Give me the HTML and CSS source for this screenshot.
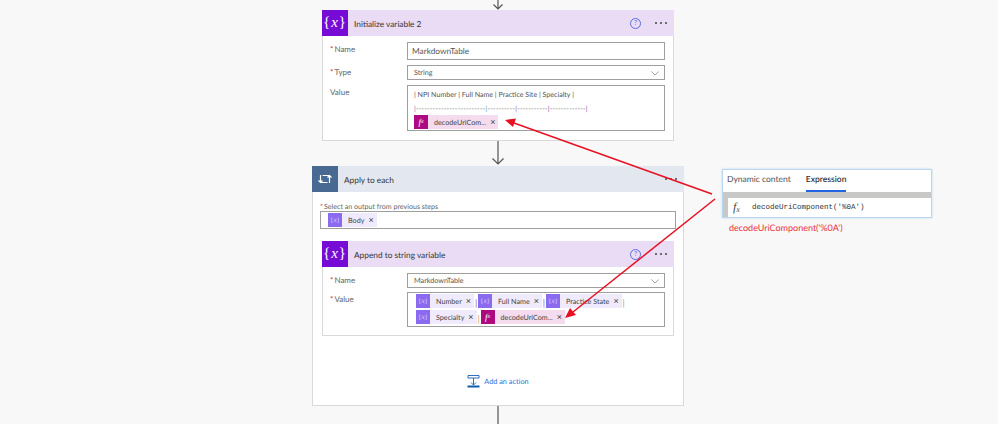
FILE: index.html
```html
<!DOCTYPE html>
<html lang="en">
<head>
  <meta charset="UTF-8">
  <title>Flow variables</title>
  <link rel="stylesheet" href="styles.css">
</head>
<body>
  <div class="flow">
    <svg class="arrow arrow-top" width="14" height="10" viewBox="0 0 14 10"><path d="M7 0V9M2.500 4.500L7 9L11.500 4.500"/></svg>

    <div class="card">
      <div class="card-head var-head">
        <div class="head-icon var-icon">{<i>x</i>}</div>
        <div class="head-title">Initialize variable 2</div>
        <div class="help">?</div>
        <div class="dots"><span></span><span></span><span></span></div>
      </div>
      <div class="card-body">
        <div class="row">
          <div class="label"><b>*</b>Name</div>
          <div class="field field-name">MarkdownTable</div>
        </div>
        <div class="row">
          <div class="label"><b>*</b>Type</div>
          <div class="field field-select">String
            <svg class="chevron" width="8" height="5" viewBox="0 0 10 6"><path d="M0.500 0.500L5 5L9.500 0.500"/></svg>
          </div>
        </div>
        <div class="row">
          <div class="label">Value</div>
          <div class="field field-value">
            <div class="value-line">| NPI Number | Full Name | Practice Site | Specialty |</div>
            <div class="value-line dash-line"><span class="p1">|</span>-------------------------<span class="p2">|</span>----------<span class="p3">|</span>-----------<span class="p4">|</span>-------------<span class="p4">|</span></div>
            <div class="chips">
              <div class="chip chip-fx"><span class="chip-icon fx-icon">f<sub>x</sub></span><span class="chip-text">decodeUriCom...</span><span class="chip-x">×</span></div>
            </div>
          </div>
        </div>
      </div>
    </div>

    <svg class="arrow arrow-mid" width="14" height="25" viewBox="0 0 14 25"><path d="M7 0V23M1.500 17.500L7 23L12.500 17.500"/></svg>

    <div class="loop">
      <div class="card-head loop-head">
        <div class="head-icon loop-icon">
          <svg width="14" height="12" viewBox="0 0 14 12"><path d="M2.500 2V9.500H9.500M11.500 10V2.500H4.500M0.500 7.500L2.500 9.500L4.500 7.500M9.500 4.500L11.500 2.500L13.500 4.500"/></svg>
        </div>
        <div class="head-title">Apply to each</div>
        <div class="dots"><span></span><span></span><span></span></div>
      </div>
      <div class="loop-body">
        <div class="top-label"><b>*</b>Select an output from previous steps</div>
        <div class="field field-output">
          <div class="chip chip-var"><span class="chip-icon var-chip-icon">{<i>x</i>}</span><span class="chip-text">Body</span><span class="chip-x">×</span></div>
        </div>

        <div class="card card-inner">
          <div class="card-head var-head">
            <div class="head-icon var-icon">{<i>x</i>}</div>
            <div class="head-title">Append to string variable</div>
            <div class="help">?</div>
            <div class="dots"><span></span><span></span><span></span></div>
          </div>
          <div class="card-body inner-body">
            <div class="row">
              <div class="label"><b>*</b>Name</div>
              <div class="field field-select">MarkdownTable
                <svg class="chevron" width="8" height="5" viewBox="0 0 10 6"><path d="M0.500 0.500L5 5L9.500 0.500"/></svg>
              </div>
            </div>
            <div class="row">
              <div class="label"><b>*</b>Value</div>
              <div class="field field-tokens">
                <div class="chips">
                  <div class="chip chip-var"><span class="chip-icon var-chip-icon">{<i>x</i>}</span><span class="chip-text">Number</span><span class="chip-x">×</span></div>
                  <span class="p3 pipe">|</span>
                  <div class="chip chip-var"><span class="chip-icon var-chip-icon">{<i>x</i>}</span><span class="chip-text">Full Name</span><span class="chip-x">×</span></div>
                  <span class="p1 pipe">|</span>
                  <div class="chip chip-var"><span class="chip-icon var-chip-icon">{<i>x</i>}</span><span class="chip-text">Practice State</span><span class="chip-x">×</span></div>
                  <span class="p5 pipe">|</span>
                </div>
                <div class="chips">
                  <div class="chip chip-var"><span class="chip-icon var-chip-icon">{<i>x</i>}</span><span class="chip-text">Specialty</span><span class="chip-x">×</span></div>
                  <span class="p5 pipe">|</span>
                  <div class="chip chip-fx"><span class="chip-icon fx-icon">f<sub>x</sub></span><span class="chip-text">decodeUriCom...</span><span class="chip-x">×</span></div>
                </div>
              </div>
            </div>
          </div>
        </div>

        <div class="add-action">
          <svg width="13" height="13" viewBox="0 0 13 13"><path class="add-line" d="M1 0.500H12V3H1ZM6.500 3V10M4 7.500L6.500 10L9 7.500"/><path class="add-bar" d="M0.500 10.500H12.500V12.500H0.500Z"/></svg>
          <span>Add an action</span>
        </div>
      </div>
    </div>

    <svg class="arrow arrow-end" width="14" height="18" viewBox="0 0 14 18"><path d="M7 0V18"/></svg>
  </div>

  <div class="popover">
    <div class="tabs">
      <div class="tab">Dynamic content</div>
      <div class="tab tab-active">Expression</div>
    </div>
    <div class="expr-band"></div>
    <div class="expr-row">
      <span class="expr-fx">f<sub>x</sub></span>
      <span class="expr-code">decodeUriComponent('%0A')</span>
    </div>
  </div>
  <div class="caption">decodeUriComponent('%0A')</div>

  <svg class="callouts" width="998" height="424" viewBox="0 0 998 424">
    <path class="red-line" d="M712 194L514 123"/>
    <path class="red-head" d="M505 120L516 118.500L513 127Z"/>
    <path class="red-line" d="M715 199L573 312"/>
    <path class="red-head" d="M565 318L570 308L576 315Z"/>
  </svg>
</body>
</html>
```

FILE: styles.css
```css
html, body {
  margin: 0;
  height: 424px;
  overflow: hidden;
}

body {
  position: relative;
  background: #f8f8f8;
  color: #444;
  font-family: Lato, "Open Sans", sans-serif;
  font-size: 8px;
  text-rendering: geometricPrecision;
}

b {
  color: #d13438;
  font-weight: normal;
  margin-right: 1px;
}

.flow {
  display: flex;
  flex-direction: column;
  align-items: center;
  width: 372px;
  margin-left: 312px;
}

.arrow {
  display: block;
  flex: none;
}

.arrow path {
  fill: none;
  stroke: #555;
  stroke-width: 1.2;
}

/* cards */
.card {
  box-sizing: border-box;
  width: 352px;
  height: 131px;
  background: #fff;
  border: 1px solid #d9d9d9;
  border-top: none;
}

.card-head {
  display: flex;
  align-items: center;
  height: 26px;
}

.var-head {
  background: #ebdcf5;
  margin: 0 -1px;
}

.head-icon {
  display: flex;
  align-items: center;
  justify-content: center;
  flex: none;
  width: 26px;
  height: 26px;
  color: #fff;
}

.var-icon {
  background: #770bd6;
  font-family: "Liberation Serif", serif;
  font-size: 15px;
  letter-spacing: 1px;
}

.loop-icon {
  background: #486991;
}

.loop-icon path {
  fill: none;
  stroke: #fff;
  stroke-width: 1.200;
}

.head-title {
  flex: 1;
  margin-left: 6px;
  padding-top: 1px;
  color: #333;
  font-size: 8.300px;
}

.help {
  width: 9px;
  height: 9px;
  margin-right: 14px;
  border: 1px solid #5a6fd8;
  border-radius: 50%;
  color: #5a6fd8;
  font-size: 7px;
  line-height: 9px;
  text-align: center;
}

.dots {
  display: flex;
  gap: 3px;
  margin-right: 7px;
}

.dots span {
  width: 2px;
  height: 2px;
  background: #444;
  border-radius: 50%;
}

.card-body {
  display: flex;
  flex-direction: column;
  gap: 5px;
  padding: 6px 8px 0 7px;
}

.row {
  display: flex;
}

.label {
  width: 77px;
  flex: none;
  padding-top: 2px;
  color: #666;
  font-size: 8px;
}

.field {
  box-sizing: border-box;
  flex: 1;
  position: relative;
  background: #fff;
  border: 1px solid #9f9f9f;
  color: #555;
  padding-left: 6px;
}

.field-name {
  height: 18px;
  font-size: 8.300px;
  line-height: 16px;
  padding-left: 4px;
}

.field-select {
  height: 15px;
  font-size: 7.200px;
  line-height: 14px;
}

.chevron {
  position: absolute;
  right: 5px;
  top: 5px;
}

.chevron path {
  fill: none;
  stroke: #777;
  stroke-width: 0.900;
}

.field-value {
  height: 46px;
  padding: 2px 0 0 6px;
}

.value-line {
  height: 14px;
  color: #555;
  font-size: 7.100px;
  line-height: 14px;
  white-space: nowrap;
}

.dash-line {
  height: 13px;
  font-size: 7px;
  line-height: 14px;
  letter-spacing: 0.180px;
  color: #666;
}

.p1 { color: #7a5ca8; }
.p2 { color: #4f9ab8; }
.p3 { color: #a0527f; }
.p4 { color: #7b3fb0; }
.p5 { color: #b8a24e; }

/* tokens */
.chips {
  display: flex;
  align-items: center;
  height: 14px;
}

.chip {
  display: flex;
  align-items: center;
  height: 14px;
  flex: none;
  font-size: 7.200px;
  color: #444;
}

.chip-var {
  background: #f0ebfc;
}

.chip-fx {
  background: #f4dcee;
}

.chip-icon {
  display: flex;
  align-items: center;
  justify-content: center;
  width: 14px;
  height: 14px;
  color: #fff;
  font-family: "Liberation Serif", serif;
}

.var-chip-icon {
  background: #8a6bf0;
  font-size: 7px;
  color: #d6ccfa;
}

.fx-icon {
  background: #ad0a82;
  font-size: 9px;
  font-style: italic;
}

.fx-icon sub {
  font-size: 6px;
  vertical-align: -1px;
}

.chip-text {
  margin-left: 6px;
  white-space: nowrap;
}

.chip-x {
  margin: 0 3px 0 4px;
  font-size: 9px;
  line-height: 14px;
}

.pipe {
  width: 4px;
  flex: none;
  text-align: center;
  font-size: 9px;
  padding-top: 3px;
}

/* apply to each */
.loop {
  box-sizing: border-box;
  width: 372px;
  height: 240px;
  background: #fff;
  border: 1px solid #d9d9d9;
  border-top: none;
  flex: none;
}

.loop-head {
  background: #e3e8f0;
  margin: 0 -1px;
}

.loop-body {
  display: flex;
  flex-direction: column;
  padding: 10px 7px 0 7px;
}

.top-label {
  height: 9px;
  color: #666;
  font-size: 7.100px;
  line-height: 10px;
}

.field-output {
  flex: none;
  display: flex;
  align-items: center;
  height: 18px;
  padding-left: 7px;
}

.card-inner {
  height: 95px;
  align-self: center;
  margin-top: 12px;
  flex: none;
}

.inner-body {
  gap: 4px;
  padding-top: 6px;
}

.field-tokens {
  height: 35px;
  padding: 1px 0 0 8px;
  display: flex;
  flex-direction: column;
  gap: 2px;
}

.add-action {
  display: flex;
  align-items: center;
  justify-content: center;
  gap: 4px;
  margin-top: 39px;
  color: #2f6fd6;
  font-size: 7.300px;
}

.add-line {
  fill: none;
  stroke: #1a5fb4;
  stroke-width: 0.900;
}

.add-bar {
  fill: #0f5cad;
}

/* expression popover */
.popover {
  position: absolute;
  left: 722px;
  top: 169px;
  box-sizing: border-box;
  width: 210px;
  height: 49px;
  background: #fff;
  border: 1px solid #b9d6f2;
  box-shadow: 0 0 2px #b9d6f2;
}

.tabs {
  display: flex;
  gap: 15px;
  height: 22px;
  padding-left: 4px;
}

.tab {
  color: #555;
  font-size: 8.500px;
  line-height: 19px;
}

.tab-active {
  color: #333;
  font-weight: 600;
  border-bottom: 2px solid #2266e3;
  height: 20px;
}

.expr-band {
  height: 6px;
  background: #c8c8c6;
}

.expr-row {
  display: flex;
  align-items: center;
  height: 19px;
  border-left: 5px solid #c8c8c6;
}

.expr-fx {
  width: 24px;
  padding-left: 5px;
  box-sizing: border-box;
  color: #444;
  font-family: "Liberation Serif", serif;
  font-size: 12px;
  font-style: italic;
}

.expr-fx sub {
  font-size: 8px;
  vertical-align: -1px;
}

.expr-code {
  color: #333;
  font-family: "Liberation Mono", monospace;
  font-size: 7.500px;
}

.caption {
  position: absolute;
  left: 729px;
  top: 222px;
  color: #e8303a;
  font-size: 9px;
  line-height: 12px;
}

.callouts {
  position: absolute;
  left: 0;
  top: 0;
  pointer-events: none;
}

.red-line {
  fill: none;
  stroke: #e81123;
  stroke-width: 1.500;
}

.red-head {
  fill: #e81123;
}
```
